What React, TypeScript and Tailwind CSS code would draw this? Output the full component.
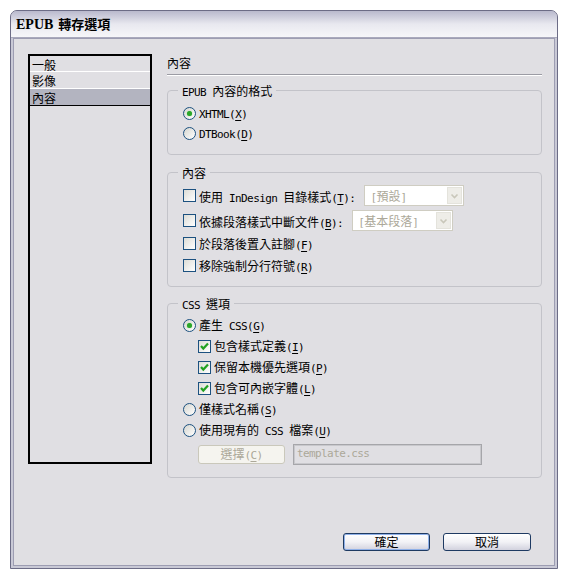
import React from "react";

function M({ s }: { s: string }) {
  const parts = s.match(/[\x00-\x7F]+|[^\x00-\x7F]+/g) ?? [];
  return (
    <>
      {parts.map((p, i) =>
        /^[\x00-\x7F]/.test(p) ? (
          <span key={i} className="font-['DejaVu_Sans_Mono',monospace] text-[11px] tracking-[-0.6px] whitespace-pre">
            {p}
          </span>
        ) : (
          <span key={i} className="font-['Noto_Sans_CJK_TC',sans-serif] text-[12px]">
            {p}
          </span>
        )
      )}
    </>
  );
}

function L({ a, k, b, dim }: { a: string; k: string; b: string; dim?: boolean }) {
  return (
    <span className={dim ? "leading-[16px] whitespace-nowrap text-[#aca899]" : "leading-[16px] whitespace-nowrap text-black"}>
      <M s={a} />
      <span className="underline underline-offset-[2px]">
        <M s={k} />
      </span>
      <M s={b} />
    </span>
  );
}

function Radio({ on }: { on?: boolean }) {
  return (
    <span className="w-[13px] h-[13px] rounded-full border border-[#1c5180] bg-linear-to-br from-[#d6d6d0] to-white flex items-center justify-center shrink-0">
      {on && <span className="w-[5px] h-[5px] rounded-full bg-[#2aa52a] shadow-[0_0_1px_#5fd45f]" />}
    </span>
  );
}

function Check({ on }: { on?: boolean }) {
  return (
    <span className="w-[13px] h-[13px] border border-[#1c5180] bg-linear-to-br from-[#dcdcd6] to-white flex items-center justify-center shrink-0">
      {on && (
        <svg width="11" height="11" viewBox="0 0 11 11">
          <polyline points="2,5 4.3,7.6 9,2.6" fill="none" stroke="#21a121" strokeWidth="2.2" />
        </svg>
      )}
    </span>
  );
}

function Group({ title, className, children }: { title: string; className: string; children: React.ReactNode }) {
  return (
    <div className={className}>
      <span className="absolute -top-[9px] left-[10px] bg-[#e0dfe3] px-[4px] leading-[16px] text-black">
        <M s={title} />
      </span>
      {children}
    </div>
  );
}

function Drop({ w, text }: { w: string; text: string }) {
  return (
    <div className={w}>
      <div className="flex-1 bg-white pl-[4px] leading-[17px] text-[#aca899] whitespace-nowrap overflow-hidden">
        <M s={text} />
      </div>
      <div className="w-[15px] ml-[1px] bg-[#eeede8] border border-[#e4e3dc] flex items-center justify-center">
        <svg width="9" height="6" viewBox="0 0 9 6">
          <polyline points="1.5,1.5 4.5,4.5 7.5,1.5" fill="none" stroke="#c9c7ba" strokeWidth="1.6" />
        </svg>
      </div>
    </div>
  );
}

export default function App() {
  return (
    <div className="min-h-[580px] bg-white pt-[10px] pl-[10px]">
      <div className="w-[548px] h-[559px] flex flex-col border border-[#6c6c86] rounded-t-[7px] bg-[#c9c9d6] overflow-hidden">
        <div className="h-[27px] shrink-0 flex items-center pl-[5px] bg-linear-to-b from-[#b9b9cd] via-[#e8e8ef] to-[#f6f6f9] border-b border-[#a9a9bc]">
          <span className="font-['Liberation_Serif',serif] font-bold text-[14px] text-black">EPUB</span>
          <span className="font-['Noto_Sans_CJK_TC',sans-serif] font-bold text-[13px] text-black ml-[5px]">轉存選項</span>
        </div>
        <div className="flex-1 mx-[2px] mb-[2px] border border-[#9d9db2] bg-[#e0dfe3] flex flex-col pl-[14px] pt-[15px]">
          <div className="flex items-start">
            <div className="w-[124px] h-[410px] border-2 border-black flex flex-col text-black">
              <div className="h-[16px] leading-[16px] pl-[2px] border-b border-white"><M s="一般" /></div>
              <div className="h-[17px] leading-[16px] pl-[2px] border-b border-white"><M s="影像" /></div>
              <div className="h-[17px] leading-[16px] pl-[2px] bg-[#b3b4c0] border-b border-black"><M s="內容" /></div>
            </div>
            <div className="ml-[15px] w-[375px] flex flex-col">
              <div className="h-[16px] leading-[16px] text-black"><M s="內容" /></div>
              <div className="mt-[4px] h-[2px] border-t border-[#9c9ca4] border-b border-b-white" />
              <Group title="EPUB 內容的格式" className="relative mt-[14px] border border-[#c3c3c9] rounded-[4px] pt-[12px] pb-[11px] pl-[15px] flex flex-col">
                <div className="h-[20px] flex items-center gap-[3px]"><Radio on /><L a="XHTML(" k="X" b=")" /></div>
                <div className="h-[20px] flex items-center gap-[3px]"><Radio /><L a="DTBook(" k="D" b=")" /></div>
              </Group>
              <Group title="內容" className="relative mt-[17px] border border-[#c3c3c9] rounded-[4px] pt-[12px] pb-[10px] pl-[15px] flex flex-col">
                <div className="h-[21px] flex items-center">
                  <Check />
                  <span className="ml-[3px]"><L a="使用 InDesign 目錄樣式(" k="T" b="):" /></span>
                  <span className="ml-[9px]"><Drop w="flex h-[21px] w-[100px] border border-[#cfcdc2] bg-white p-[1px]" text="[預設]" /></span>
                </div>
                <div className="mt-[4px] h-[21px] flex items-center">
                  <Check />
                  <span className="ml-[3px]"><L a="依據段落樣式中斷文件(" k="B" b="):" /></span>
                  <span className="ml-[9px]"><Drop w="flex h-[21px] w-[101px] border border-[#cfcdc2] bg-white p-[1px]" text="[基本段落]" /></span>
                </div>
                <div className="mt-[1px] h-[22px] flex items-center">
                  <Check />
                  <span className="ml-[3px]"><L a="於段落後置入註腳(" k="F" b=")" /></span>
                </div>
                <div className="h-[22px] flex items-center">
                  <Check />
                  <span className="ml-[3px]"><L a="移除強制分行符號(" k="R" b=")" /></span>
                </div>
              </Group>
              <Group title="CSS 選項" className="relative mt-[16px] border border-[#c3c3c9] rounded-[4px] pt-[11px] pb-[13px] pl-[15px] flex flex-col">
                <div className="h-[21px] flex items-center gap-[3px]"><Radio on /><L a="產生 CSS(" k="G" b=")" /></div>
                <div className="h-[21px] flex items-center gap-[3px] ml-[15px]"><Check on /><L a="包含樣式定義(" k="I" b=")" /></div>
                <div className="h-[21px] flex items-center gap-[3px] ml-[15px]"><Check on /><L a="保留本機優先選項(" k="P" b=")" /></div>
                <div className="h-[21px] flex items-center gap-[3px] ml-[15px]"><Check on /><L a="包含可內嵌字體(" k="L" b=")" /></div>
                <div className="h-[21px] flex items-center gap-[3px]"><Radio /><L a="僅樣式名稱(" k="S" b=")" /></div>
                <div className="h-[21px] flex items-center gap-[3px]"><Radio /><L a="使用現有的 CSS 檔案(" k="U" b=")" /></div>
                <div className="mt-[3px] h-[20px] flex items-center ml-[15px]">
                  <div className="w-[87px] h-[19px] border border-[#cac8bb] rounded-[3px] bg-[#f5f4ef] flex items-center justify-center">
                    <L a="選擇(" k="C" b=")" dim />
                  </div>
                  <div className="ml-[8px] w-[189px] h-[21px] border border-[#a6a6aa] shadow-[inset_0_0_0_1px_#c8c8cc] pl-[3px] flex items-center text-[#aca899]">
                    <span className="font-['DejaVu_Sans_Mono',monospace] text-[11px] tracking-[-0.6px]">template.css</span>
                  </div>
                </div>
              </Group>
            </div>
          </div>
          <div className="mt-[55px] flex justify-end pr-[23px] gap-[13px]">
            <div className="w-[87px] h-[18px] rounded-[3px] border border-[#1e3a62] bg-linear-to-b from-white via-[#f2f2f6] to-[#d2d2de] shadow-[inset_0_0_0_1px_#8fb0e8] flex items-center justify-center text-black">
              <M s="確定" />
            </div>
            <div className="w-[88px] h-[18px] rounded-[3px] border border-[#1e3a62] bg-linear-to-b from-white via-[#f2f2f6] to-[#d2d2de] flex items-center justify-center text-black">
              <M s="取消" />
            </div>
          </div>
        </div>
      </div>
    </div>
  );
}
